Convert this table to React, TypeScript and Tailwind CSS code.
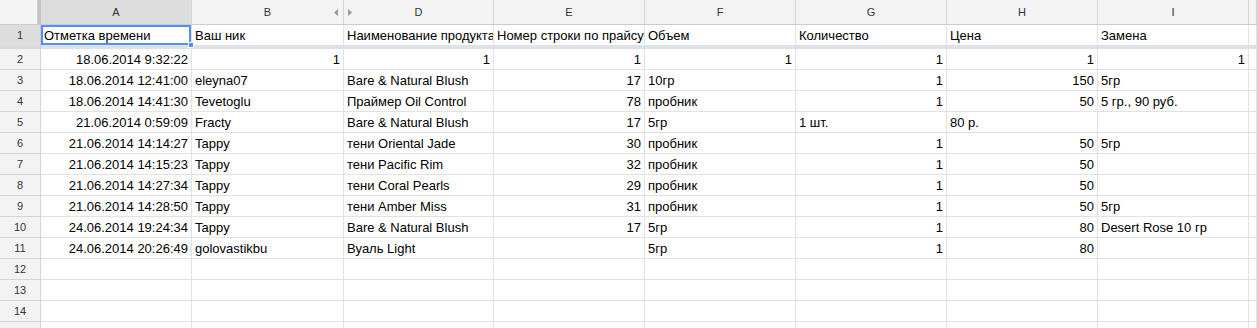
import React from 'react';

type Cell = string | [string, 'r'];

const cols = ['A', 'B', 'D', 'E', 'F', 'G', 'H', 'I', ''];

const header: Cell[] = [
  'Отметка времени',
  'Ваш ник',
  'Наименование продукта',
  'Номер строки по прайсу',
  'Объем',
  'Количество',
  'Цена',
  'Замена',
];

const rows: Cell[][] = [
  [['18.06.2014 9:32:22', 'r'], ['1', 'r'], ['1', 'r'], ['1', 'r'], ['1', 'r'], ['1', 'r'], ['1', 'r'], ['1', 'r']],
  [['18.06.2014 12:41:00', 'r'], 'eleyna07', 'Bare & Natural Blush', ['17', 'r'], '10гр', ['1', 'r'], ['150', 'r'], '5гр'],
  [['18.06.2014 14:41:30', 'r'], 'Tevetoglu', 'Праймер Oil Control', ['78', 'r'], 'пробник', ['1', 'r'], ['50', 'r'], '5 гр., 90 руб.'],
  [['21.06.2014 0:59:09', 'r'], 'Fracty', 'Bare & Natural Blush', ['17', 'r'], '5гр', '1 шт.', '80 р.', ''],
  [['21.06.2014 14:14:27', 'r'], 'Tappy', 'тени Oriental Jade', ['30', 'r'], 'пробник', ['1', 'r'], ['50', 'r'], '5гр'],
  [['21.06.2014 14:15:23', 'r'], 'Tappy', 'тени Pacific Rim', ['32', 'r'], 'пробник', ['1', 'r'], ['50', 'r'], ''],
  [['21.06.2014 14:27:34', 'r'], 'Tappy', 'тени Coral Pearls', ['29', 'r'], 'пробник', ['1', 'r'], ['50', 'r'], ''],
  [['21.06.2014 14:28:50', 'r'], 'Tappy', 'тени Amber Miss', ['31', 'r'], 'пробник', ['1', 'r'], ['50', 'r'], '5гр'],
  [['24.06.2014 19:24:34', 'r'], 'Tappy', 'Bare & Natural Blush', ['17', 'r'], '5гр', ['1', 'r'], ['80', 'r'], 'Desert Rose 10 гр'],
  [['24.06.2014 20:26:49', 'r'], 'golovastikbu', 'Вуаль Light', '', '5гр', ['1', 'r'], ['80', 'r'], ''],
  [],
  [],
  [],
  [],
];

const grid = 'grid grid-cols-[41px_151px_152px_150px_151px_151px_151px_151px_151px_1fr]';

const DataCell = ({ c }: { c?: Cell }) => {
  const text = c === undefined ? '' : typeof c === 'string' ? c : c[0];
  const right = Array.isArray(c);
  return (
    <div
      className={`border-r border-b border-[#e2e2e2] px-[3px] overflow-hidden whitespace-nowrap leading-[22px] ${
        right ? 'text-right' : 'text-left'
      }`}
    >
      {text}
    </div>
  );
};

const App: React.FC = () => {
  return (
    <div className="w-[1257px] h-[328px] overflow-hidden bg-white text-[13px] text-black font-['Liberation_Sans',Arial,sans-serif]">
      {/* column letters */}
      <div className={`${grid} h-[25px] bg-[#f3f3f3] border-b border-[#cccccc] text-[11px] text-[#333]`}>
        <div className="flex">
          <div className="flex-1 border-r border-[#d0d0d0]" />
          <div className="w-[3px] bg-[#c4c4c4]" />
        </div>
        {cols.map((l, i) => (
          <div
            key={i}
            className={`relative flex items-center justify-center border-r border-[#d6d6d6] ${
              l === 'A' ? 'bg-[#dddddd]' : ''
            }`}
          >
            {l}
            {l === 'B' && (
              <svg className="absolute right-[5px] top-[9px]" width="4" height="7" viewBox="0 0 4 7">
                <path d="M4 0 L0 3.5 L4 7 Z" fill="#9a9a9a" />
              </svg>
            )}
            {l === 'D' && (
              <svg className="absolute left-[4px] top-[9px]" width="4" height="7" viewBox="0 0 4 7">
                <path d="M0 0 L4 3.5 L0 7 Z" fill="#9a9a9a" />
              </svg>
            )}
          </div>
        ))}
      </div>

      {/* frozen row 1 */}
      <div className={`${grid} h-[20px]`}>
        <div className="bg-[#dddddd] border-r border-[#cccccc] text-[11px] text-[#333] flex items-center justify-center">
          1
        </div>
        {header.map((h, i) => (
          <div
            key={i}
            className="relative border-r border-[#e2e2e2] px-[3px] overflow-hidden whitespace-nowrap leading-[22px]"
          >
            {h}
            {i === 0 && (
              <div className="absolute inset-0 border-2 border-[#4d90fe] pointer-events-none" />
            )}
          </div>
        ))}
        <div className="border-r border-[#e2e2e2]" />
      </div>

      {/* freeze bar */}
      <div className={`${grid} h-[4px]`}>
        <div className="bg-[#d9d9d9] border-r border-[#cccccc]" />
        <div className="col-span-9 bg-[#dde1e8] relative">
          <div className="absolute left-[147px] -top-[3px] w-[6px] h-[6px] bg-[#4d90fe] border border-white" />
        </div>
      </div>

      {rows.map((r, ri) => (
        <div key={ri} className={`${grid} h-[21px]`}>
          <div className="bg-[#f3f3f3] border-r border-b border-[#d4d4d4] text-[11px] text-[#333] flex items-center justify-center">
            {ri + 2}
          </div>
          {Array.from({ length: 8 }).map((_, ci) => (
            <DataCell key={ci} c={r[ci]} />
          ))}
          <div className="border-r border-b border-[#e2e2e2]" />
        </div>
      ))}
    </div>
  );
};

export default App;
